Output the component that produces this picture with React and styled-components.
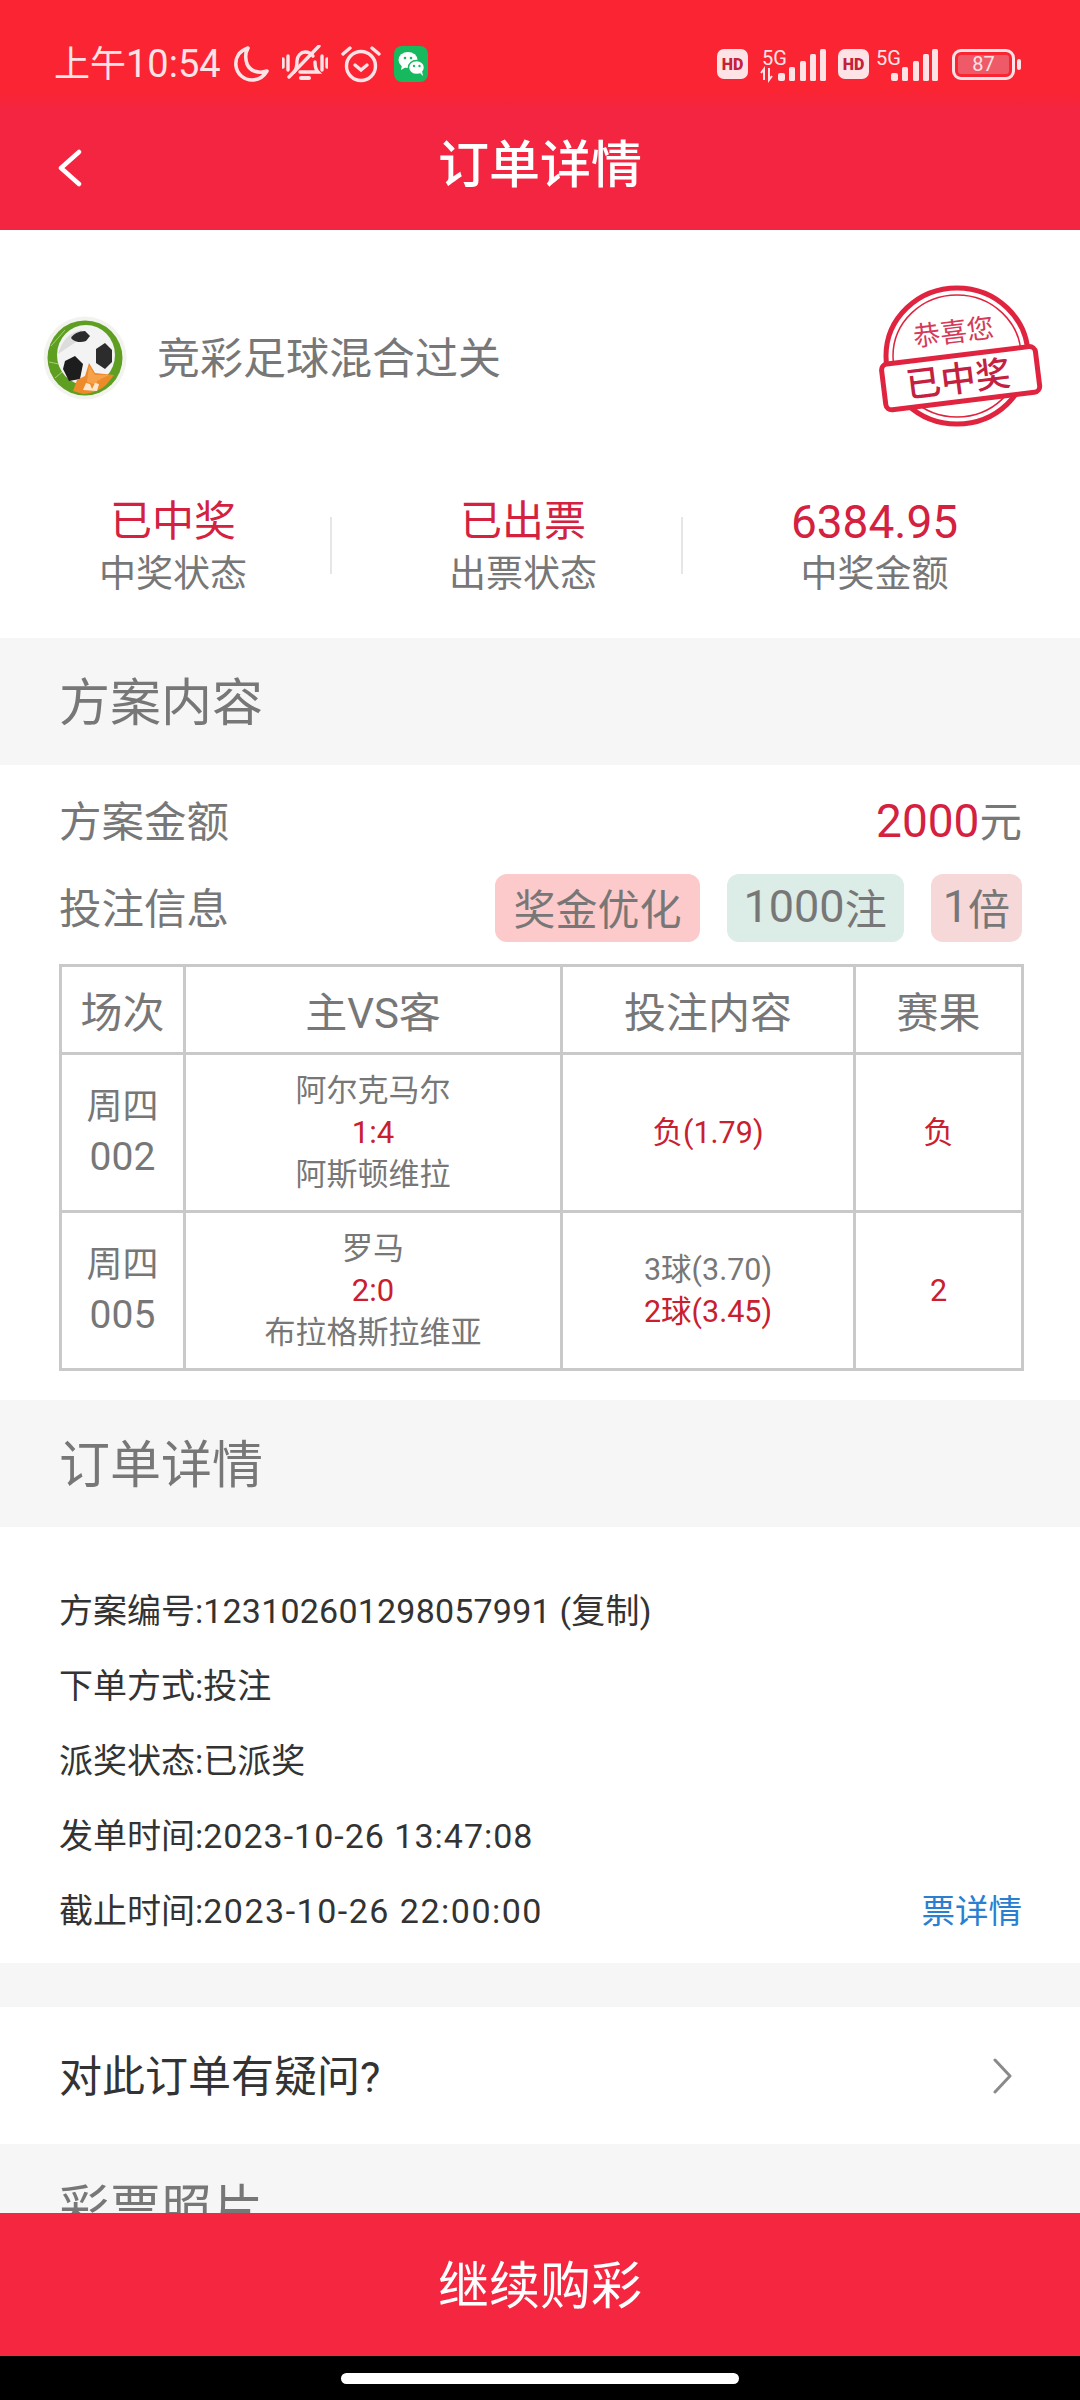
import React from 'react';
import styled, { createGlobalStyle } from 'styled-components';

const FONT = '"Roboto", "Noto Sans CJK SC", sans-serif';
const PALE = '#fde3e5';
const GREY_TEXT = '#777777';
const RED = '#d3213f';

const GlobalStyle = createGlobalStyle`
  html, body { margin: 0; padding: 0; background: #000; }
  body { font-family: ${FONT}; }
  * { box-sizing: border-box; }
`;

const Page = styled.div`
  width: 1080px;
  height: 2400px;
  display: flex;
  flex-direction: column;
  overflow: hidden;
  background: #fff;
`;

const StatusBar = styled.div`
  height: 105px;
  flex: none;
  padding: 45px 65px 0 54px;
  display: flex;
  justify-content: space-between;
  align-items: flex-start;
  background: linear-gradient(#fb2432 0, #fb2432 88px, #f42540 112px);
  color: ${PALE};
`;

const StatusGroup = styled.div`
  display: flex;
  align-items: center;
  gap: ${(p) => p.$gap || 13}px;
  height: 38px;
`;

const Clock = styled.span`
  font-size: 36px;
  line-height: 38px;
  width: 166px;
  white-space: nowrap;

  & b {
    font-size: 38px;
    font-weight: 400;
  }
`;

const HdBadge = styled.span`
  width: 31px;
  height: 30px;
  border-radius: 7px;
  background: ${PALE};
  color: #c5213a;
  font-size: 16px;
  font-weight: 900;
  display: flex;
  align-items: center;
  justify-content: center;
`;

const SignalSlot = styled.span`
  display: flex;
  margin-left: ${(p) => p.$shift || 0}px;

  & svg {
    overflow: visible;
  }
`;

const Battery = styled.div`
  width: 63px;
  height: 31px;
  border: 3px solid ${PALE};
  border-radius: 9px;
  padding: 3px;
  position: relative;
  margin-left: 2px;

  &::after {
    content: '';
    position: absolute;
    right: -9px;
    top: 7px;
    width: 4px;
    height: 11px;
    border-radius: 2px;
    background: ${PALE};
  }
`;

const BatteryFill = styled.div`
  height: 100%;
  border-radius: 3px;
  background: #ef5a68;
  color: ${PALE};
  font-size: 20px;
  line-height: 19px;
  text-align: center;
`;

const NavBar = styled.div`
  height: 125px;
  flex: none;
  background: #f42540;
  display: grid;
  grid-template-columns: 1fr auto 1fr;
  align-items: center;
  padding: 0 58px;
`;

const NavTitle = styled.h1`
  margin: 0;
  padding-bottom: 4px;
  font-size: 51px;
  font-weight: 500;
  color: #fff;
  line-height: 60px;
`;

const Content = styled.div`
  flex: 1;
  min-height: 0;
  overflow: hidden;
  background: #f6f6f7;
`;

const WhiteBlock = styled.section`
  background: #fff;
  padding: ${(p) => p.$padding || '0'};
`;

const Lottery = styled.div`
  height: 256px;
  padding: 0 31px 0 43px;
  display: flex;
  align-items: center;
  justify-content: space-between;
`;

const LotteryName = styled.div`
  display: flex;
  align-items: center;
  gap: 30px;
  font-size: 43px;
  color: ${GREY_TEXT};
`;

const StampSlot = styled.div`
  display: flex;
  padding-top: 3px;
`;

const Raised = styled.span`
  padding-bottom: 6px;
`;

const Stats = styled.div`
  height: 152px;
  padding-top: 10px;
  display: grid;
  grid-template-columns: 346px 354px 349px;
`;

const Stat = styled.div`
  position: relative;
  text-align: center;

  &:not(:last-child)::after {
    content: '';
    position: absolute;
    right: 17px;
    top: 21px;
    height: 57px;
    width: 2px;
    background: #e6e6e6;
  }

  &:first-child::after {
    right: 14px;
  }
`;

const StatValue = styled.div`
  font-size: ${(p) => (p.$digits ? 46 : 42)}px;
  line-height: 52px;
  color: ${RED};
`;

const StatLabel = styled.div`
  font-size: 37px;
  line-height: 54px;
  color: ${GREY_TEXT};
`;

const SectionHead = styled.h2`
  margin: 0;
  height: 127px;
  padding: 0 59px 6px;
  display: flex;
  align-items: center;
  font-size: 51px;
  font-weight: 400;
  color: ${GREY_TEXT};
  background: #f6f6f7;
`;

const InfoRow = styled.div`
  display: flex;
  align-items: center;
  justify-content: space-between;
  height: ${(p) => p.$height}px;
  margin-bottom: ${(p) => p.$after}px;
  font-size: 42.5px;
  color: ${GREY_TEXT};
`;

const Amount = styled.span`
  padding-bottom: 6px;
  color: ${GREY_TEXT};

  & b {
    font-size: 46px;
    font-weight: 400;
    color: ${RED};
  }
`;

const Tags = styled.div`
  display: flex;
  gap: 27px;
`;

const Tag = styled.span`
  height: 68px;
  padding: 0 ${(p) => p.$pad || 18}px 4px;
  border-radius: 12px;
  background: ${(p) => p.$bg};
  display: flex;
  align-items: center;
  font-size: 42px;
  color: ${GREY_TEXT};

  & b {
    font-size: 45px;
    font-weight: 400;
  }
`;

const Table = styled.table`
  width: 962px;
  border-collapse: collapse;
  table-layout: fixed;
  color: ${GREY_TEXT};

  th, td {
    border: 3px solid #c9c9c9;
    padding: 0;
    text-align: center;
  }

  th {
    height: 88px;
    font-size: 42px;
    font-weight: 400;
  }
`;

const BodyRow = styled.tr`
  height: 158px;
`;

const RoundCell = styled.td`
  font-size: 36px;
  line-height: 50px;

  & b {
    font-size: 39px;
    font-weight: 400;
  }
`;

const MatchCell = styled.td`
  font-size: 31px;
  line-height: 42px;
`;

const PickCell = styled.td`
  font-size: 30.5px;
  line-height: 42px;
`;

const Hit = styled.div`
  color: #c9202f;
`;

const DetailRow = styled.div`
  height: 75px;
  padding: 0 58px 5px 59px;
  display: flex;
  align-items: center;
  justify-content: space-between;
  font-size: 34px;
  color: #333;
`;

const DetailValue = styled.span`
  letter-spacing: ${(p) => p.$spacing || 0}px;
`;

const TicketLink = styled.span`
  color: #2b7fd0;
  font-size: 33.5px;
`;

const GreyGap = styled.div`
  height: ${(p) => p.$height}px;
  background: #f6f6f7;
`;

const QuestionRow = styled.div`
  height: 137px;
  padding: 0 67px 0 59px;
  background: #fff;
  display: flex;
  align-items: center;
  justify-content: space-between;
  font-size: 43px;
  color: #333;
`;

const BuyBar = styled.button`
  flex: none;
  height: 143px;
  border: 0;
  padding: 0 0 6px;
  background: #f42640;
  color: #fff;
  font-family: ${FONT};
  font-size: 51px;
`;

const HomeArea = styled.div`
  flex: none;
  height: 44px;
  background: #000;
  padding-top: 17px;
  display: flex;
  justify-content: center;
  align-items: flex-start;
`;

const HomeBar = styled.div`
  width: 398px;
  height: 11px;
  border-radius: 6px;
  background: #fff;
`;

const MoonIcon = () => (
  <svg width="36" height="38" viewBox="0 0 36 38" fill="none" stroke={PALE} strokeWidth="3.6">
    <path d="M15 3C6 6 2 13 3 21c1 8 8 14 16 14 7 0 12-4 15-9-9 3-17 0-20-7-2-6-2-11 1-16z" strokeLinejoin="round" />
  </svg>
);

const MuteIcon = () => (
  <svg width="46" height="38" viewBox="0 0 46 38" fill="none" stroke={PALE} strokeWidth="3.4" strokeLinecap="round">
    <path d="M1 14v8M6 11v14M40 11v14M45 14v8" />
    <path d="M12 27c3-3 3-7 3-11 0-5 4-9 8-9 3 0 6 1 8 4M33 17c0 4 0 7 3 10H18" />
    <path d="M19 33h8" strokeWidth="4" />
    <path d="M37 1 7 32" />
  </svg>
);

const AlarmIcon = () => (
  <svg width="40" height="38" viewBox="0 0 40 38" fill="none" stroke={PALE} strokeWidth="3.4" strokeLinecap="round">
    <circle cx="20" cy="21" r="14.5" />
    <path d="M2 9l7-6M38 9l-7-6" />
    <path d="M14 20l6 5 6-5" />
  </svg>
);

const WechatIcon = () => (
  <svg width="34" height="36" viewBox="0 0 34 36">
    <rect width="34" height="36" rx="8" fill="#17b95e" />
    <ellipse cx="14" cy="14" rx="9.5" ry="8" fill="#fff" />
    <path d="M8 19l-1 5 5-3z" fill="#fff" />
    <ellipse cx="22.5" cy="21.5" rx="8" ry="7" stroke="#17b95e" strokeWidth="1.5" fill="#fff" />
    <path d="M26 27l3 3-1-5z" fill="#fff" />
    <circle cx="11" cy="12" r="1.3" fill="#17b95e" />
    <circle cx="17" cy="12" r="1.3" fill="#17b95e" />
    <circle cx="20" cy="20" r="1.2" fill="#17b95e" />
    <circle cx="25.5" cy="20" r="1.2" fill="#17b95e" />
  </svg>
);

const SignalIcon = ({ data }) => (
  <svg width={data ? 66 : 63} height="34" viewBox={data ? '0 0 66 34' : '0 0 63 34'}>
    <text x={data ? 2 : 1} y="18" fontSize="20" fill={PALE} fontFamily="Roboto, sans-serif">5G</text>
    {data && <path d="M4 33V22l-3 4M9 21v12l3-4" stroke={PALE} strokeWidth="2" fill="none" />}
    <g fill={PALE}>
      <rect x={data ? 18 : 16} y="26" width="7" height="8" rx="2" />
      <rect x={data ? 29 : 27} y="20" width="6" height="14" rx="1.5" />
      <rect x={data ? 40 : 38} y="14" width="6" height="20" rx="1.5" />
      <rect x={data ? 50 : 48} y="7" width="6" height="27" rx="1.5" />
      <rect x={data ? 60 : 57} y="2" width="6" height="32" rx="1.5" />
    </g>
  </svg>
);

const BackIcon = () => (
  <svg width="24" height="38" viewBox="0 0 24 38" fill="none" stroke="#fff" strokeWidth="4.5" strokeLinecap="round" strokeLinejoin="round">
    <path d="M21 3 3 19l18 16" />
  </svg>
);

const ChevronIcon = () => (
  <svg width="21" height="36" viewBox="0 0 21 36" fill="none" stroke="#8a8a8a" strokeWidth="3" strokeLinecap="round" strokeLinejoin="round">
    <path d="M3 2l15 16L3 34" />
  </svg>
);

const BallLogo = () => (
  <svg width="84" height="84" viewBox="0 0 84 84">
    <circle cx="42" cy="42" r="41.5" fill="#f2f2ee" />
    <circle cx="42" cy="42" r="37.5" fill="#5e9f22" />
    <path d="M8 30l14-16M6 46l20 4M12 62l14-12" stroke="#a9cf7d" strokeWidth="1" fill="none" />
    <ellipse cx="43" cy="39" rx="29" ry="30" fill="#f3f3f3" />
    <path d="M15 38c4-14 12-22 24-24l-6 12z" fill="#dcdcdc" />
    <path d="M28 22c2-4 8-7 14-7l5 5-4 5c-5 2-10 1-13-1z" fill="#2b2b2b" />
    <path d="M53 33l9-6 7 7 0 12-7 7-9-6z" fill="#2c2c2c" />
    <path d="M22 45l10-5 8 8-3 15-11 2-6-12z" fill="#1d1d1d" />
    <path d="M46 47l6 10 19 2-7 9c-3 4-15 10-24 10l-10-3 4-11 8-4z" fill="#ed8a2a" />
    <path d="M46 50l6 9 14 0-12 6 0 4-10-3z" fill="#f6a24a" />
    <path d="M40 74l3-7 4 1 2 5 3-6 4 1-2 7z" fill="#fde8cf" />
  </svg>
);

const WinStamp = () => (
  <svg width="170" height="150" viewBox="0 0 170 150" fill="none">
    <ellipse cx="78" cy="71" rx="71" ry="68" stroke="#e0243f" strokeWidth="5" />
    <ellipse cx="78" cy="71" rx="64" ry="61" stroke="#e0243f" strokeWidth="1.5" />
    <g transform="rotate(-7 83 92)">
      <text x="80" y="56" textAnchor="middle" fontSize="27" fill="#d53a58" fontFamily="Noto Sans CJK SC, sans-serif">恭喜您</text>
      <rect x="4" y="70" width="155" height="46" rx="6" fill="#fff" stroke="#e0243f" strokeWidth="5" />
      <text x="79" y="106" textAnchor="middle" fontSize="35" fontWeight="500" fill="#c3213f" fontFamily="Noto Sans CJK SC, sans-serif">已中奖</text>
    </g>
  </svg>
);

const STATS = [
  { value: '已中奖', label: '中奖状态' },
  { value: '已出票', label: '出票状态' },
  { value: '6384.95', label: '中奖金额', digits: true },
];

const MATCHES = [
  { week: '周四', num: '002', home: '阿尔克马尔', score: '1:4', away: '阿斯顿维拉', picks: [{ text: '负(1.79)', hit: true }], result: '负' },
  { week: '周四', num: '005', home: '罗马', score: '2:0', away: '布拉格斯拉维亚', picks: [{ text: '3球(3.70)' }, { text: '2球(3.45)', hit: true }], result: '2' },
];

const DETAILS = [
  { label: '方案编号:', value: '123102601298057991 (复制)', spacing: 0.2 },
  { label: '下单方式:', value: '投注' },
  { label: '派奖状态:', value: '已派奖' },
  { label: '发单时间:', value: '2023-10-26 13:47:08', spacing: 1 },
  { label: '截止时间:', value: '2023-10-26 22:00:00', spacing: 1.5, link: true },
];

export default function App() {
  return (
    <Page>
      <GlobalStyle />
      <StatusBar>
        <StatusGroup>
          <Clock>上午<b>10:54</b></Clock>
          <MoonIcon />
          <MuteIcon />
          <AlarmIcon />
          <WechatIcon />
        </StatusGroup>
        <StatusGroup $gap={12}>
          <HdBadge>HD</HdBadge>
          <SignalSlot><SignalIcon data /></SignalSlot>
          <HdBadge>HD</HdBadge>
          <SignalSlot $shift={-6}><SignalIcon /></SignalSlot>
          <Battery>
            <BatteryFill>87</BatteryFill>
          </Battery>
        </StatusGroup>
      </StatusBar>

      <NavBar>
        <BackIcon />
        <NavTitle>订单详情</NavTitle>
      </NavBar>

      <Content>
        <WhiteBlock>
          <Lottery>
            <LotteryName>
              <BallLogo />
              <Raised>竞彩足球混合过关</Raised>
            </LotteryName>
            <StampSlot><WinStamp /></StampSlot>
          </Lottery>
          <Stats>
            {STATS.map(({ value, label, digits }) => (
              <Stat key={label}>
                <StatValue $digits={digits}>{value}</StatValue>
                <StatLabel>{label}</StatLabel>
              </Stat>
            ))}
          </Stats>
        </WhiteBlock>

        <SectionHead>方案内容</SectionHead>
        <WhiteBlock $padding="28px 58px 29px 59px">
          <InfoRow $height={56} $after={25}>
            <Raised>方案金额</Raised>
            <Amount><b>2000</b>元</Amount>
          </InfoRow>
          <InfoRow $height={68} $after={22}>
            <Raised>投注信息</Raised>
            <Tags>
              <Tag $bg="#fccaca">奖金优化</Tag>
              <Tag $bg="#dcece6" $pad={17}><b>1000</b>注</Tag>
              <Tag $bg="#f6d8d8" $pad={12}><b>1</b>倍</Tag>
            </Tags>
          </InfoRow>
          <Table>
            <colgroup>
              <col width="124" />
              <col width="377" />
              <col width="293" />
              <col width="168" />
            </colgroup>
            <thead>
              <tr>
                <th>场次</th>
                <th>主VS客</th>
                <th>投注内容</th>
                <th>赛果</th>
              </tr>
            </thead>
            <tbody>
              {MATCHES.map((m) => (
                <BodyRow key={m.num}>
                  <RoundCell>{m.week}<br /><b>{m.num}</b></RoundCell>
                  <MatchCell>
                    <div>{m.home}</div>
                    <Hit>{m.score}</Hit>
                    <div>{m.away}</div>
                  </MatchCell>
                  <PickCell>
                    {m.picks.map((pick) => (pick.hit ? <Hit key={pick.text}>{pick.text}</Hit> : <div key={pick.text}>{pick.text}</div>))}
                  </PickCell>
                  <PickCell><Hit>{m.result}</Hit></PickCell>
                </BodyRow>
              ))}
            </tbody>
          </Table>
        </WhiteBlock>

        <SectionHead>订单详情</SectionHead>
        <WhiteBlock $padding="46px 0 15px">
          {DETAILS.map(({ label, value, spacing, link }) => (
            <DetailRow key={label}>
              <span>{label}<DetailValue $spacing={spacing}>{value}</DetailValue></span>
              {link && <TicketLink>票详情</TicketLink>}
            </DetailRow>
          ))}
        </WhiteBlock>

        <GreyGap $height={44} />
        <QuestionRow>
          <Raised>对此订单有疑问?</Raised>
          <ChevronIcon />
        </QuestionRow>
        <SectionHead>彩票照片</SectionHead>
      </Content>

      <BuyBar>继续购彩</BuyBar>
      <HomeArea>
        <HomeBar />
      </HomeArea>
    </Page>
  );
}
